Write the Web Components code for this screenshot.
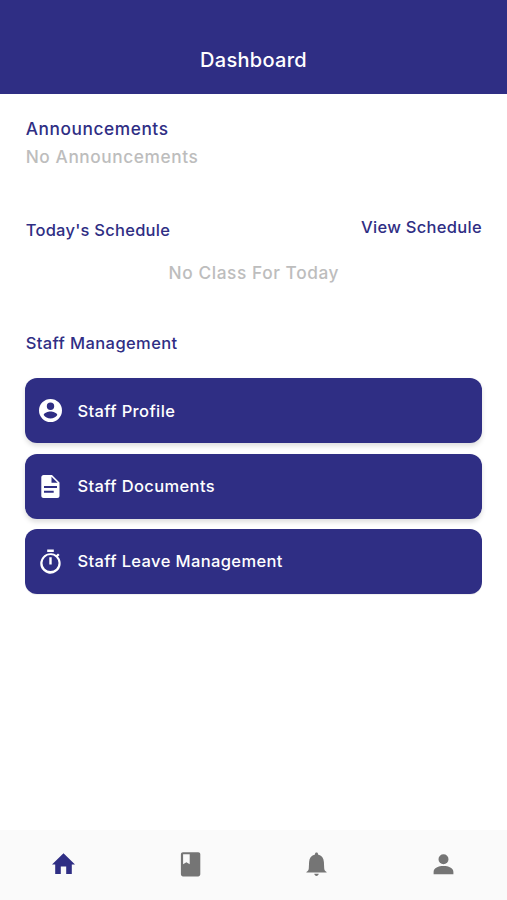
<!DOCTYPE html>
<html lang="en"><head><meta charset="utf-8"><title>Dashboard</title>
<style>html,body{margin:0;height:100%;background:#fff}body{font-family:Inter,"Liberation Sans",sans-serif}</style></head>
<body><staff-app></staff-app>
<script>
const icons={
account:'M13.5 2a11.5 11.5 0 1 0 0 23a11.5 11.5 0 0 0 0-23zm0 3.6a3.7 3.7 0 1 1 0 7.4a3.7 3.7 0 0 1 0-7.4zm0 15.9c-2.9 0-5.3-1.4-6.8-3.5c.1-2.3 4.5-3.5 6.8-3.5s6.7 1.2 6.8 3.5c-1.500 2.100-3.900 3.500-6.800 3.500z',
document:'M6.600 2H15l7.500 7.500v13.200c0 1.300-.9 2.300-2.200 2.300H6.600c-1.300 0-2.300-1-2.300-2.300V4.300C4.300 3 5.300 2 6.600 2zM14.500 3.700v6.100h6.100zM7 13v2h13v-2zM7 17.700v2h9.700v-2z',
timer:'M10.200 1.600h6.600v2.300h-6.600zM12.300 9.200h2.400v7.300h-2.400zM21 8.600l1.600-1.600-1.600-1.600-1.700 1.700A10.200 10.200 0 1 0 21 8.600zM13.500 23.100a8 8 0 1 1 0-16a8 8 0 0 1 0 16z',
home:'M13.500 2.500L25 13.700h-3.200v9.600h-5.600v-7.700h-5.400v7.700H5.200v-9.600H2z',
book:'M6 1.400h15.200c1.200 0 2.100.9 2.100 2.100v20c0 1.200-.9 2.100-2.100 2.100H6c-1.200 0-2.100-.9-2.100-2.100v-20c0-1.200.9-2.100 2.100-2.100zM6.100 3.500v10l3.300-2 3.300 2v-10z',
bell:'M13.500 1.700c1 0 1.500.6 1.500 1.500v.5c3.600.8 5.700 3.400 5.900 7.400l.3 6.300c.1 1.700.8 2.800 2.400 3.700v.7H3.400v-.7c1.600-.9 2.300-2 2.400-3.700l.3-6.300C6.300 7.100 8.400 4.500 12 3.700v-.5c0-.9.500-1.500 1.500-1.500zM11.300 23h4.400c-.2 1.400-1 2.100-2.200 2.100s-2-.7-2.200-2.100z',
person:'M13.500 3.500a5 5 0 1 1 0 10a5 5 0 0 1 0-10zM13.500 15.200c4.900 0 9.900 1.800 9.900 6v2.200H3.600v-2.200c0-4.200 5-6 9.900-6z'};
function define(name,html,setup){customElements.define(name,class extends HTMLElement{connectedCallback(){if(this.shadowRoot)return;this.attachShadow({mode:'open'}).innerHTML=html;if(setup)setup(this,this.shadowRoot)}})}
define('app-icon','<style>:host{display:block;width:27px;height:27px;flex:none}svg{display:block;width:100%;height:100%;fill:currentColor}</style><svg viewBox="0 0 27 27"><path fill-rule="evenodd"/></svg>',(h,r)=>r.querySelector('path').setAttribute('d',icons[h.getAttribute('name')]));
define('app-header','<style>:host{display:flex;height:93.6px;box-sizing:border-box;padding-top:46px;justify-content:center;background:#2f2e84;color:#fff;font-size:20px;font-weight:500;line-height:28px;letter-spacing:.3px}</style><slot></slot>');
define('text-line','<style>:host{display:block;color:#2f2e84;font-size:17.3px;font-weight:500;line-height:24px;letter-spacing:.58px;white-space:nowrap}:host([muted]){color:#bdbdbd}</style><slot></slot>');
define('action-card','<style>:host{display:flex;align-items:center;box-sizing:border-box;height:65px;padding-left:12px;gap:13px;border-radius:12px;background:#2f2e84;color:#fff;font-size:16.5px;font-weight:500;letter-spacing:.38px;box-shadow:0 3px 5px #0002}:host(:last-child){box-shadow:0 1px 1px #0001}</style><slot name="icon"></slot><span><slot></slot></span>');
define('bottom-nav','<style>:host{display:grid;grid-template-columns:repeat(4,1fr);height:70px;background:#fafafa;color:#757575;justify-items:center;align-items:center}::slotted(*){transform:translateY(-1.2px)}::slotted([active]){color:#2f2e84}</style><slot></slot>');
define('staff-app',`<style>:host{display:flex;flex-direction:column;height:900px}main{flex:1;padding:23.4px 25px 0 25.7px}.muted{margin-top:4px}.schedule{display:flex;justify-content:space-between;margin-top:46px}.today,.view,.staff{font-size:16.5px;letter-spacing:.25px}.view{letter-spacing:.3px}.today{margin-top:3px}.none{text-align:center;margin-top:19px}.staff{margin-top:46px;letter-spacing:.4px}.cards{display:grid;gap:10.2px;margin:23.5px 0 0 -.3px}</style>
<app-header>Dashboard</app-header><main><text-line class="a">Announcements</text-line><text-line muted class="muted">No Announcements</text-line><div class="schedule"><text-line class="today">Today's Schedule</text-line><text-line class="view">View Schedule</text-line></div><text-line muted class="none">No Class For Today</text-line><text-line class="staff">Staff Management</text-line><div class="cards"><action-card><app-icon slot="icon" name="account"></app-icon>Staff Profile</action-card><action-card><app-icon slot="icon" name="document"></app-icon>Staff Documents</action-card><action-card><app-icon slot="icon" name="timer"></app-icon>Staff Leave Management</action-card></div></main><bottom-nav><app-icon active name="home"></app-icon><app-icon name="book"></app-icon><app-icon name="bell"></app-icon><app-icon name="person"></app-icon></bottom-nav>`);
</script></body></html>
